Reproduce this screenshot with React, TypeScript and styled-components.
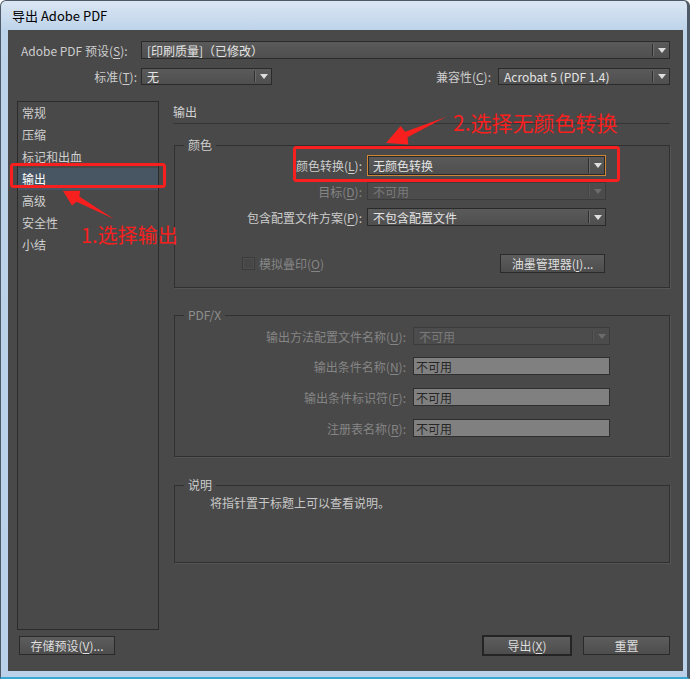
import React from 'react';
import styled, { createGlobalStyle } from 'styled-components';

const GlobalStyle = createGlobalStyle`
  html, body {
    margin: 0;
    padding: 0;
    background: #ffffff;
  }
  body {
    font-family: "Noto Sans CJK SC", "Liberation Sans", sans-serif;
    font-size: 12px;
  }
  * {
    box-sizing: border-box;
  }
`;

const Window = styled.div`
  position: relative;
  width: 690px;
  height: 679px;
  display: flex;
  flex-direction: column;
  background: linear-gradient(#dae6f3 0, #bdd3ea 30px, #bad1e9 100%);
  border: 1px solid #4e5a67;
  border-right-width: 3px;
  border-bottom: 2px solid #38a8d2;
  border-radius: 6px 6px 0 0;
  padding: 0 4px 6px 7px;
`;

const TitleBar = styled.div`
  height: 29px;
  display: flex;
  align-items: center;
  padding-left: 4px;
  font-size: 13px;
  color: #000;
`;

const Content = styled.div`
  flex: 1;
  display: flex;
  flex-direction: column;
  background: #494949;
  padding: 11px 13px 0 9px;
  color: #cdcdcd;
`;

const TopRow = styled.div<{ $h: number; $mt?: number }>`
  display: flex;
  align-items: center;
  gap: 4px;
  height: ${p => p.$h}px;
  margin-top: ${p => p.$mt ?? 0}px;
  padding-left: 4px;
`;

const FieldLabel = styled.span<{ $w?: number; $left?: boolean; $dim?: boolean; $pr?: number }>`
  flex: none;
  ${p => (p.$w ? `width: ${p.$w}px;` : '')}
  text-align: ${p => (p.$left ? 'left' : 'right')};
  padding-right: ${p => p.$pr ?? 0}px;
  white-space: nowrap;
  color: ${p => (p.$dim ? '#858585' : '#cdcdcd')};
`;

const U = styled.span`
  text-decoration: underline;
  text-underline-offset: 2px;
`;

const Spacer = styled.div`
  flex: 1;
`;

const Select = styled.div<{ $w?: number; $h: number; $disabled?: boolean; $focused?: boolean }>`
  display: flex;
  align-items: center;
  height: ${p => p.$h}px;
  ${p => (p.$w ? `width: ${p.$w}px; flex: none;` : 'flex: 1;')}
  border: 1px solid ${p => (p.$focused ? '#d08634' : p.$disabled ? '#3c3c3c' : '#2a2a2a')};
  box-shadow: ${p => (p.$focused ? 'inset 0 0 0 1px #2a2a2a' : 'none')};
  background: ${p => (p.$disabled ? '#4c4c4c' : 'linear-gradient(#5a5a5a, #4f4f4f)')};
  color: ${p => (p.$disabled ? '#7a7a7a' : '#e4e4e4')};
`;

const SelectValue = styled.span`
  flex: 1;
  padding-left: 5px;
  white-space: nowrap;
  overflow: hidden;
`;

const SelectSep = styled.span<{ $disabled?: boolean }>`
  width: 1px;
  height: calc(100% - 4px);
  background: ${p => (p.$disabled ? '#444' : '#2e2e2e')};
  box-shadow: 1px 0 0 ${p => (p.$disabled ? '#575757' : '#6b6b6b')};
`;

const SelectArrow = styled.span<{ $disabled?: boolean }>`
  width: 16px;
  display: flex;
  justify-content: center;
  &::after {
    content: '';
    border-left: 4px solid transparent;
    border-right: 4px solid transparent;
    border-top: 5px solid ${p => (p.$disabled ? '#6c6c6c' : '#dedede')};
    margin-left: 1px;
  }
`;

function Dropdown(props: { value: string; w?: number; h: number; disabled?: boolean; focused?: boolean }) {
  const { value, w, h, disabled, focused } = props;
  return (
    <Select $w={w} $h={h} $disabled={disabled} $focused={focused}>
      <SelectValue>{value}</SelectValue>
      <SelectSep $disabled={disabled} />
      <SelectArrow $disabled={disabled} />
    </Select>
  );
}

const Main = styled.div`
  display: flex;
  margin-top: 16px;
  height: 529px;
`;

const SideList = styled.div`
  width: 142px;
  flex: none;
  border: 1px solid #2b2b2b;
`;

const SideItem = styled.div<{ $active?: boolean }>`
  height: 22px;
  line-height: 22px;
  padding-left: 4px;
  color: ${p => (p.$active ? '#ffffff' : '#cfcfcf')};
  background: ${p => (p.$active ? '#485563' : 'transparent')};
`;

const Pane = styled.div`
  flex: 1;
  margin-left: 14px;
  display: flex;
  flex-direction: column;
`;

const PaneHeading = styled.div`
  height: 23px;
  line-height: 22px;
  border-bottom: 1px solid #353535;
  color: #d2d2d2;
`;

const Group = styled.div<{ $h: number; $mt: number; $pt: number }>`
  position: relative;
  height: ${p => p.$h}px;
  margin: ${p => p.$mt}px 0 0 1px;
  border: 1px solid #303030;
  box-shadow: 1px 1px 0 #555555;
  padding-top: ${p => p.$pt}px;
  display: flex;
  flex-direction: column;
`;

const GroupTitle = styled.span<{ $dim?: boolean }>`
  position: absolute;
  left: 9px;
  top: -9px;
  padding: 0 4px;
  line-height: 16px;
  background: #494949;
  color: ${p => (p.$dim ? '#8e8e8e' : '#cdcdcd')};
`;

const FormRow = styled.div<{ $h: number; $mt?: number; $pr?: number }>`
  display: flex;
  align-items: center;
  height: ${p => p.$h}px;
  margin-top: ${p => p.$mt ?? 0}px;
  padding-right: ${p => p.$pr ?? 0}px;
`;

const Field = styled.div<{ $w: number }>`
  width: ${p => p.$w}px;
  height: 18px;
  flex: none;
  display: flex;
  align-items: center;
  padding-left: 2px;
  background: #808080;
  border: 1px solid #2f2f2f;
  color: #262626;
`;

const CheckBox = styled.span`
  width: 13px;
  height: 13px;
  flex: none;
  margin-left: 67px;
  border: 1px solid #3a3a3a;
  background: #474747;
  box-shadow: inset 0 0 0 1px #4f4f4f;
`;

const CheckText = styled.span`
  margin-left: 4px;
  color: #858585;
`;

const Button = styled.button<{ $w: number; $h: number; $default?: boolean }>`
  width: ${p => p.$w}px;
  height: ${p => p.$h}px;
  flex: none;
  padding: 0;
  font-family: inherit;
  font-size: 12px;
  color: #dedede;
  background: linear-gradient(#5d5d5d, #4d4d4d);
  border: ${p => (p.$default ? '2px solid #242424' : '1px solid #2a2a2a')};
`;

const NoteText = styled.div`
  padding-left: 35px;
  color: #c8c8c8;
`;

const BottomBar = styled.div`
  display: flex;
  align-items: center;
  height: 21px;
  margin-top: 5px;
  padding-left: 2px;
  gap: 11px;
`;

const Overlay = styled.svg`
  position: absolute;
  left: -1px;
  top: -1px;
  width: 690px;
  height: 679px;
  pointer-events: none;
`;

const Note = styled.span<{ $x: number; $y: number; $size: number }>`
  position: absolute;
  left: ${p => p.$x - 1}px;
  top: ${p => p.$y - 1}px;
  font-size: ${p => p.$size}px;
  line-height: ${p => p.$size}px;
  color: #f7201e;
  white-space: nowrap;
`;

const sideItems = ['常规', '压缩', '标记和出血', '输出', '高级', '安全性', '小结'];

export default function App() {
  return (
    <>
      <GlobalStyle />
      <Window>
        <TitleBar>导出 Adobe PDF</TitleBar>
        <Content>
          <TopRow $h={18}>
            <FieldLabel $w={116} $left>
              Adobe PDF 预设(<U>S</U>):
            </FieldLabel>
            <Dropdown h={18} value="[印刷质量]（已修改）" />
          </TopRow>
          <TopRow $h={17} $mt={9}>
            <FieldLabel $w={116}>
              标准(<U>T</U>):
            </FieldLabel>
            <Dropdown h={17} w={131} value="无" />
            <Spacer />
            <FieldLabel $pr={3}>
              兼容性(<U>C</U>):
            </FieldLabel>
            <Dropdown h={17} w={172} value="Acrobat 5 (PDF 1.4)" />
          </TopRow>

          <Main>
            <SideList>
              {sideItems.map(item => (
                <SideItem key={item} $active={item === '输出'}>
                  {item}
                </SideItem>
              ))}
            </SideList>

            <Pane>
              <PaneHeading>输出</PaneHeading>

              <Group $h={143} $mt={21} $pt={9}>
                <GroupTitle>颜色</GroupTitle>
                <FormRow $h={21}>
                  <FieldLabel $w={192} $pr={5}>
                    颜色转换(<U>L</U>):
                  </FieldLabel>
                  <Dropdown h={21} w={239} value="无颜色转换" focused />
                </FormRow>
                <FormRow $h={18} $mt={6}>
                  <FieldLabel $w={192} $pr={5} $dim>
                    目标(<U>D</U>):
                  </FieldLabel>
                  <Dropdown h={18} w={239} value="不可用" disabled />
                </FormRow>
                <FormRow $h={18} $mt={8}>
                  <FieldLabel $w={192} $pr={5}>
                    包含配置文件方案(<U>P</U>):
                  </FieldLabel>
                  <Dropdown h={18} w={239} value="不包含配置文件" />
                </FormRow>
                <FormRow $h={19} $mt={28} $pr={64}>
                  <CheckBox />
                  <CheckText>
                    模拟叠印(<U>O</U>)
                  </CheckText>
                  <Spacer />
                  <Button $w={105} $h={19}>
                    油墨管理器(<U>I</U>)...
                  </Button>
                </FormRow>
              </Group>

              <Group $h={142} $mt={27} $pt={11}>
                <GroupTitle $dim>PDF/X</GroupTitle>
                <FormRow $h={18}>
                  <FieldLabel $w={238} $pr={7} $dim>
                    输出方法配置文件名称(<U>U</U>):
                  </FieldLabel>
                  <Dropdown h={18} w={197} value="不可用" disabled />
                </FormRow>
                <FormRow $h={18} $mt={12}>
                  <FieldLabel $w={238} $pr={7} $dim>
                    输出条件名称(<U>N</U>):
                  </FieldLabel>
                  <Field $w={197}>不可用</Field>
                </FormRow>
                <FormRow $h={18} $mt={13}>
                  <FieldLabel $w={238} $pr={7} $dim>
                    输出条件标识符(<U>F</U>):
                  </FieldLabel>
                  <Field $w={197}>不可用</Field>
                </FormRow>
                <FormRow $h={18} $mt={13}>
                  <FieldLabel $w={238} $pr={7} $dim>
                    注册表名称(<U>R</U>):
                  </FieldLabel>
                  <Field $w={197}>不可用</Field>
                </FormRow>
              </Group>

              <Group $h={78} $mt={28} $pt={8}>
                <GroupTitle>说明</GroupTitle>
                <NoteText>将指针置于标题上可以查看说明。</NoteText>
              </Group>
            </Pane>
          </Main>

          <BottomBar>
            <Button $w={96} $h={19}>
              存储预设(<U>V</U>)...
            </Button>
            <Spacer />
            <Button $w={90} $h={21} $default>
              导出(<U>X</U>)
            </Button>
            <Button $w={87} $h={19}>
              重置
            </Button>
          </BottomBar>
        </Content>

        {/* annotations drawn over the dialog */}
        <Overlay viewBox="0 0 690 679">
          <rect x="11.5" y="164.5" width="153" height="22" rx="2" fill="none" stroke="#f7201e" strokeWidth="3" />
          <rect x="294.5" y="147.5" width="324" height="33" rx="2" fill="none" stroke="#f7201e" strokeWidth="3" />
          <polygon
            points="63,191 80.2,190.8 79.3,196.6 114,219 76.5,201.8 72,205.6"
            fill="#f7201e"
          />
          <polygon
            points="386,143 400.6,126.1 405.1,131.7 446,117 407.5,137.3 408.3,144.5"
            fill="#f7201e"
          />
        </Overlay>
        <Note $x={81} $y={225} $size={20}>
          1.选择输出
        </Note>
        <Note $x={453} $y={112} $size={21}>
          2.选择无颜色转换
        </Note>
      </Window>
    </>
  );
}
